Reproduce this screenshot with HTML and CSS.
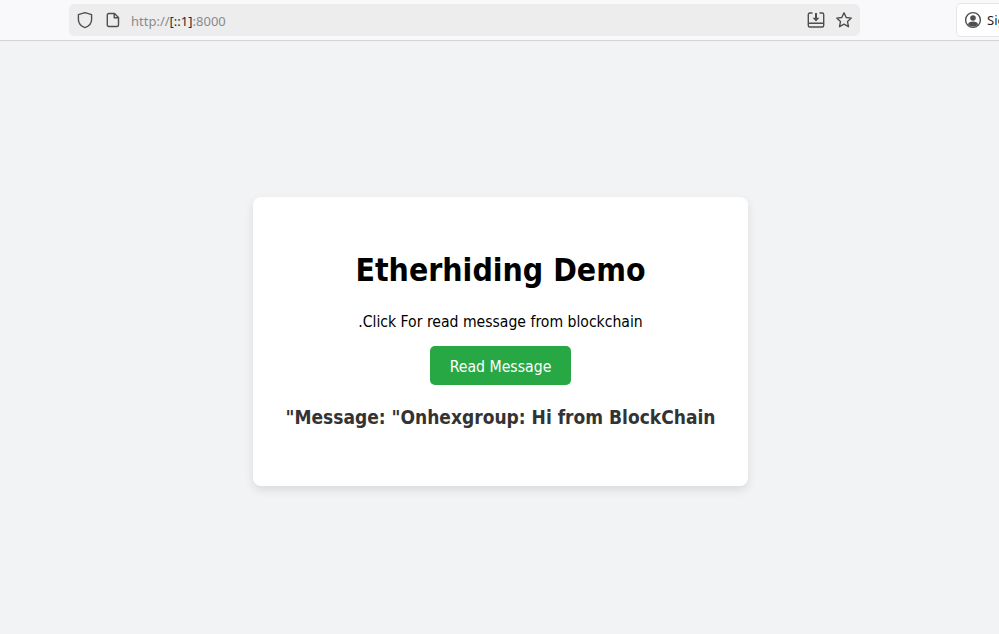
FILE: index.html
```html
<!DOCTYPE html>
<html lang="en">
<head>
    <meta charset="UTF-8">
    <meta name="viewport" content="width=device-width, initial-scale=1.0">
    <title>Etherhiding Demo</title>
    <link rel="stylesheet" href="styles.css">
</head>
<body>
    <div class="toolbar">
        <div class="urlbar">
            <svg class="icon shield" width="18" height="18" viewBox="0 0 18 18"><path d="M9 1.7 L15.6 3.6 V8.5 C15.6 12.5 12.8 15.2 9 16.6 C5.2 15.2 2.4 12.5 2.4 8.5 V3.6 Z"/></svg>
            <svg class="icon page" width="14" height="16" viewBox="0 0 14 16"><path d="M2.8 1.5 H8.5 L12.5 5.5 V13 C12.5 13.9 11.9 14.5 11 14.5 H2.8 C1.9 14.5 1.3 13.9 1.3 13 V3 C1.3 2.1 1.9 1.5 2.8 1.5 Z M8.2 1.5 V5.8 H12.5"/></svg>
            <div class="url">http://<span class="host">[::1]</span>:8000</div>
            <svg class="icon save" width="18" height="18" viewBox="0 0 18 18"><path d="M5.5 2 H2.8 C1.9 2 1.3 2.6 1.3 3.5 V14.5 C1.3 15.4 1.9 16 2.8 16 H15.2 C16.1 16 16.7 15.4 16.7 14.5 V3.5 C16.7 2.6 16.1 2 15.2 2 H12.5 M1.3 12.3 H16.7"/><path class="solid" d="M8 2 H10 V6.8 H12.4 L9 10.4 L5.6 6.8 H8 Z"/></svg>
            <svg class="icon star" width="18" height="18" viewBox="0 0 18 18"><path d="M9 1.8 L11.2 6.5 L16.3 7.1 L12.5 10.6 L13.5 15.7 L9 13.2 L4.5 15.7 L5.5 10.6 L1.7 7.1 L6.8 6.5 Z"/></svg>
        </div>
        <div class="signin">
            <svg class="icon" width="18" height="18" viewBox="0 0 18 18"><circle cx="9" cy="9" r="7.4"/><circle class="solid" cx="9" cy="7" r="2.8"/><path class="solid" d="M3.9 13.2 C5 11.2 6.8 10.6 9 10.6 C11.2 10.6 13 11.2 14.1 13.2 C12.8 14.8 11 15.6 9 15.6 C7 15.6 5.2 14.8 3.9 13.2 Z"/></svg>
            <span>Sign in</span>
        </div>
    </div>

    <div class="main">
        <div class="card">
            <h1>Etherhiding Demo</h1>
            <p class="note">.Click For read message from blockchain</p>
            <button>Read Message</button>
            <div class="message">"Message: "Onhexgroup: Hi from BlockChain</div>
        </div>
    </div>
</body>
</html>
```

FILE: styles.css
```css
html, body {
    height: 100%;
}
body {
    margin: 0;
    font-family: 'DejaVu Sans Condensed', 'DejaVu Sans', sans-serif;
    background-color: #f2f3f5;
    color: #000;
    overflow: hidden;
    display: flex;
    flex-direction: column;
}
.toolbar {
    height: 40px;
    flex: none;
    display: flex;
    align-items: center;
    background-color: #f9f9fb;
    border-bottom: 1px solid #d4d4d6;
    overflow: hidden;
}
.urlbar {
    width: 791px;
    height: 32px;
    margin-left: 69px;
    flex: none;
    display: flex;
    align-items: center;
    background-color: #ededee;
    border-radius: 5px;
    padding: 0 7px;
    box-sizing: border-box;
}
.icon {
    flex: none;
    fill: none;
    stroke: #4f4f52;
    stroke-width: 1.4;
    stroke-linejoin: round;
}
.icon .solid {
    fill: #4f4f52;
    stroke: none;
}
.page {
    margin-left: 12px;
}
.url {
    flex: 1;
    margin-left: 11px;
    padding-top: 1px;
    font-family: 'Noto Sans', sans-serif;
    font-size: 13px;
    color: #8a8a8c;
}
.host {
    color: #2b2b2e;
}
.star {
    margin-left: 10px;
}
.signin {
    margin-left: 96px;
    height: 32px;
    padding: 0 7px;
    flex: none;
    display: flex;
    align-items: center;
    gap: 5px;
    background-color: #fff;
    border: 1px solid #e6e6e8;
    border-radius: 5px;
    font-family: 'Noto Sans', sans-serif;
    font-size: 13px;
    color: #222;
}
.main {
    flex: 1;
    display: flex;
    align-items: center;
    justify-content: center;
    padding-top: 8px;
    padding-left: 2px;
}
.card {
    width: 495px;
    height: 289px;
    box-sizing: border-box;
    padding-top: 54px;
    background-color: #fff;
    border-radius: 8px;
    box-shadow: 0 4px 10px rgba(0, 0, 0, 0.1);
    text-align: center;
}
h1 {
    margin: 0;
    font-size: 31.7px;
    line-height: 38px;
    font-weight: bold;
}
.note {
    margin: 23px 0 0;
    font-size: 15.6px;
    line-height: 20px;
}
button {
    display: block;
    margin: 14px auto 0;
    width: 141px;
    height: 39px;
    padding: 1px 0 0;
    border: none;
    border-radius: 5px;
    background-color: #28a745;
    color: #fff;
    font-family: 'DejaVu Sans Condensed', 'DejaVu Sans', sans-serif;
    font-size: 15.7px;
}
.message {
    margin-top: 21px;
    font-size: 19px;
    line-height: 22px;
    font-weight: bold;
    color: #333;
}
```
